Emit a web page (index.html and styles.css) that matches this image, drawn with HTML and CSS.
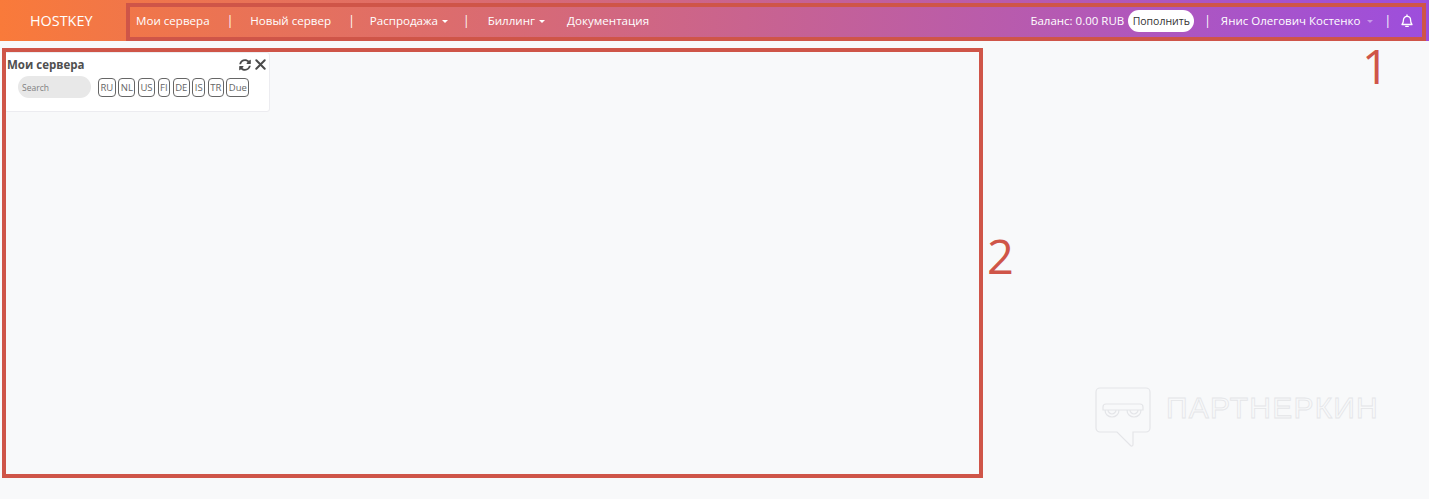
FILE: index.html
```html
<!DOCTYPE html>
<html lang="ru">
<head>
<meta charset="utf-8">
<title>HOSTKEY</title>
<link rel="stylesheet" href="styles.css">
</head>
<body>
<header class="topbar">
  <a class="brand">HOSTKEY</a>
  <nav class="nav">
    <a class="nav-link">Мои сервера</a><span class="sep sep-a">|</span>
    <a class="nav-link">Новый сервер</a><span class="sep sep-b">|</span>
    <a class="nav-link caret">Распродажа</a><span class="sep sep-c">|</span>
    <a class="nav-link caret">Биллинг</a>
    <a class="nav-link doc">Документация</a>
  </nav>
  <div class="account">
    <span class="balance">Баланс: 0.00 RUB</span>
    <button class="topup">Пополнить</button>
    <span class="sep sep-d">|</span>
    <span class="user caret muted">Янис Олегович Костенко</span>
    <span class="sep sep-e">|</span>
    <svg class="bell" width="14" height="14" viewBox="0 0 14 14" fill="none" stroke="#fff" stroke-width="1.300"><path d="M2 10.500c1-1 1.400-2 1.400-4.200C3.400 4 5 2.400 7 2.400s3.600 1.600 3.600 3.900c0 2.200.4 3.200 1.400 4.200z" stroke-linejoin="round"/><path d="M5.700 12.300h2.600M7 1v1.400" stroke-linecap="round"/></svg>
  </div>
</header>
<main class="content">
  <section class="card">
    <div class="card-head">
      <h2 class="card-title">Мои сервера</h2>
      <div class="card-tools">
        <svg width="12" height="12" viewBox="0 0 512 512" fill="#4a4a4a"><path d="M370.720 133.280C339.458 104.008 298.888 87.962 255.848 88c-77.458.068-144.328 53.178-162.791 126.850-1.344 5.363-6.122 9.150-11.651 9.150H24.103c-7.498 0-13.194-6.807-11.807-14.176C33.933 94.924 134.813 8 256 8c66.448 0 126.791 26.136 171.315 68.685L463.030 40.970C478.149 25.851 504 36.559 504 57.941V192c0 13.255-10.745 24-24 24H345.941c-21.382 0-32.090-25.851-16.971-40.971l41.750-41.749zM32 296h134.059c21.382 0 32.090 25.851 16.971 40.971l-41.750 41.750c31.262 29.273 71.835 45.319 114.876 45.280 77.418-.07 144.315-53.144 162.787-126.849 1.344-5.363 6.122-9.150 11.651-9.150h57.304c7.498 0 13.194 6.807 11.807 14.176C478.067 417.076 377.187 504 256 504c-66.448 0-126.791-26.136-171.315-68.685L48.970 471.030C33.851 486.149 8 475.441 8 454.059V320c0-13.255 10.745-24 24-24z"/></svg>
        <svg width="11" height="11" viewBox="0 0 11 11" fill="none" stroke="#4a4a4a" stroke-width="2" stroke-linecap="round"><path d="M1.300 1.300l8.400 8.400M9.700 1.300l-8.400 8.400"/></svg>
      </div>
    </div>
    <div class="filters">
      <input class="search" type="text" placeholder="Search">
      <div class="tags">
        <span class="tag">RU</span><span class="tag">NL</span><span class="tag">US</span><span class="tag">FI</span><span class="tag">DE</span><span class="tag">IS</span><span class="tag">TR</span><span class="tag">Due</span>
      </div>
    </div>
  </section>
</main>

<div class="note note-one"></div>
<span class="note-num num-one">1</span>
<div class="note note-two"></div>
<span class="note-num num-two">2</span>

<div class="watermark">
  <svg width="60" height="62" viewBox="0 0 60 62" fill="none" stroke="#e4e5e8" stroke-width="1.200"><path d="M5 2h46a4 4 0 0 1 4 4v36a4 4 0 0 1-4 4H38v12.500c0 1.500-1.500 2-2.500 1L22 46H5a4 4 0 0 1-4-4V6a4 4 0 0 1 4-4z"/><path d="M8 24v-3q0-3 3-3h34q3 0 3 3v3zM10 24c0 4 3 7 7 7s7-3 7-7M32 24c0 4 3 7 7 7s7-3 7-7M13 24c0 2 2 4 4 4s4-2 4-4M35 24c0 2 2 4 4 4s4-2 4-4"/></svg>
  <span class="watermark-text">ПАРТНЕРКИН</span>
</div>
</body>
</html>
```
FILE: styles.css
```css
* { box-sizing: border-box; }
html, body { margin: 0; height: 499px; overflow: hidden; }
body {
  background: #f8f9fa;
  font-family: "Open Sans", "Noto Sans", sans-serif;
  color: #4a4a4a;
  position: relative;
}
.topbar {
  height: 41px;
  display: flex;
  align-items: center;
  background: linear-gradient(90deg, #f97a3a 0%, #9d4edd 100%);
  color: #fff;
  font-size: 11.600px;
}
.brand {
  width: 136px;
  padding-left: 30px;
  font-size: 14.400px;
  color: #fff;
}
.nav { display: flex; align-items: center; color: #fff; }
.nav-link { white-space: nowrap; }
.sep { color: #fff; font-size: 12px; }
.sep-a { margin: 0 17px; }
.sep-b { margin: 0 15px 0 17px; }
.sep-c { margin: 0 18px 0 15px; }
.doc { margin-left: 22px; }
.caret::after {
  content: "";
  display: inline-block;
  margin-left: 4px;
  vertical-align: 2px;
  border-top: 3px solid currentColor;
  border-left: 3px solid transparent;
  border-right: 3px solid transparent;
}
.account {
  margin-left: auto;
  padding-right: 15px;
  display: flex;
  align-items: center;
  font-size: 11.500px;
}
.balance { white-space: nowrap; }
.topup {
  margin-left: 4px;
  height: 22px;
  width: 66px;
  padding: 0;
  border: 0;
  border-radius: 11px;
  background: #fff;
  color: #333;
  font: 10.500px "Open Sans", sans-serif;
}
.sep-d { margin: 0 10px; }
.user { white-space: nowrap; font-size: 11.500px; }
.muted::after { color: #c79ae8; margin-left: 7px; }
.sep-e { margin: 0 9px 0 11px; }
.bell { display: block; }

.content { padding: 11px 0 0 4px; }
.card {
  width: 266px;
  height: 60px;
  background: #fff;
  border: 1px solid #ececf0;
  border-radius: 3px;
  padding: 3px 3px 0 2px;
}
.card-head { display: flex; justify-content: space-between; align-items: center; height: 17px; }
.card-title { margin: 0; font-size: 11.500px; font-weight: 700; color: #4f4f4f; }
.card-tools { display: flex; align-items: center; gap: 4px; }
.filters { display: flex; align-items: center; margin: 3px 0 0 11px; }
.search {
  width: 73px;
  height: 22px;
  border: 0;
  border-radius: 11px;
  background: #e8e8e8;
  padding: 0 4px;
  font: 8.500px "Open Sans", sans-serif;
  outline: none;
}
.search::placeholder { color: #808080; }
.tags { display: flex; gap: 2.500px; margin-left: 7px; }
.tag {
  height: 19px;
  padding: 0 1.500px;
  min-width: 12px;
  border: 1px solid #666;
  border-radius: 4px;
  font-size: 9.500px;
  line-height: 17px;
  color: #666;
  text-align: center;
  background: #fff;
}

.note { position: absolute; border: 4px solid #cf5548; pointer-events: none; }
.note-one { left: 126px; top: 3px; width: 1300px; height: 38px; }
.note-two { left: 2px; top: 48px; width: 981px; height: 430px; }
.note-num {
  position: absolute;
  color: #cf5548;
  font-family: "Open Sans", sans-serif;
  font-size: 47px;
  line-height: 1;
}
.num-one { left: 1362px; top: 43px; }
.num-two { left: 987px; top: 233px; }

.watermark {
  position: absolute;
  left: 1095px;
  top: 386px;
  display: flex;
  align-items: flex-start;
}
.watermark-text {
  margin: 5px 0 0 11px;
  font-family: "Liberation Sans", sans-serif;
  font-size: 30px;
  line-height: 34px;
  letter-spacing: 1.200px;
  color: transparent;
  -webkit-text-stroke: 0.800px #e4e5e8;
  white-space: nowrap;
}
```
